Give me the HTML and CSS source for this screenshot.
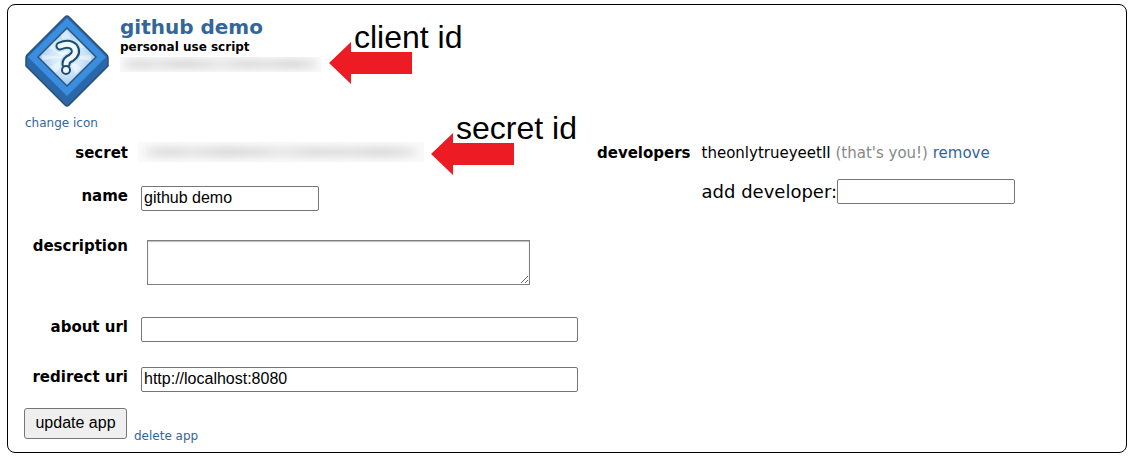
FILE: index.html
```html
<!DOCTYPE html>
<html lang="en">
<head>
<meta charset="utf-8">
<meta name="viewport" content="width=device-width, initial-scale=1">
<title>github demo</title>
<link rel="stylesheet" href="styles.css">
</head>
<body>
<main class="app-card">
  <header class="app-header">
    <svg class="app-icon" viewBox="0 0 84 92" aria-hidden="true">
      <defs>
        <radialGradient id="glow"><stop offset="0" stop-color="#f4faff"/><stop offset="0.5" stop-color="#d3e8fa"/><stop offset="1" stop-color="#a3cbef"/></radialGradient>
      </defs>
      <path d="M40 2Q42 0 44 2L82 40Q83 41 83 43V51L44 90Q42 92 40 90L1 51V43Q1 41 2 40Z" fill="#2b68ab" stroke="#2a4f75" stroke-width="1.5" stroke-linejoin="round"/>
      <path d="M42 3 81 42 42 81 3 42Z" fill="#3b8de0"/>
      <path d="M42 13 71 42 42 71 13 42Z" fill="url(#glow)" stroke="#2b5580" stroke-width="1.5"/>
      <path d="M42 42 36 20 42 15 45 20ZM42 42 53 26 59 32ZM42 42 66 40V46ZM42 42 56 53 51 59ZM42 42 31 58 25 52ZM42 42 17 45V40ZM42 42 24 33 30 26Z" fill="#fff" opacity="0.45"/>
      <g fill="none" stroke-linecap="round" stroke-linejoin="round">
        <path d="M35 31Q44 27 49 32Q53 38 46 43Q41 45 41 49" stroke="#bfe6f2" stroke-width="12"/>
        <path d="M35 31Q44 27 49 32Q53 38 46 43Q41 45 41 49" stroke="#204a70" stroke-width="9"/>
        <path d="M35 31Q44 27 49 32Q53 38 46 43Q41 45 41 49" stroke="#eef8ff" stroke-width="5"/>
      </g>
      <circle cx="41" cy="55" r="4" fill="#eef8ff" stroke="#204a70" stroke-width="2"/>
    </svg>
    <div class="app-summary">
      <h2 class="app-name"><a href="#app">github demo</a></h2>
      <h3 class="app-type">personal use script</h3>
      <div class="redacted redacted-client"></div>
    </div>
  </header>
  <a class="small-link change-icon" href="#icon">change icon</a>

  <form class="app-form">
    <div class="columns">
      <div class="fields">
        <span class="label">secret</span>
        <div class="redacted redacted-secret"></div>
        <label class="label" for="name">name</label>
        <input class="text-box" id="name" type="text" value="github demo">
        <label class="label" for="description">description</label>
        <textarea class="description" id="description"></textarea>
        <label class="label" for="about">about url</label>
        <input class="text-box wide" id="about" type="text">
        <label class="label" for="redirect">redirect uri</label>
        <input class="text-box wide" id="redirect" type="text" value="http://localhost:8080">
      </div>
      <div class="developers">
        <span class="label">developers</span>
        <div class="developer-list">
          <div class="developer">theonlytrueyeetII <span class="muted">(that's you!)</span> <a href="#remove">remove</a></div>
          <div class="add-developer"><label for="developer">add developer:</label><input class="text-box" id="developer" type="text"></div>
        </div>
      </div>
    </div>
    <div class="actions">
      <button class="update" type="button">update app</button>
      <a class="small-link" href="#delete">delete app</a>
    </div>
  </form>

  <div class="note note-client">
    <svg class="arrow" viewBox="0 0 83 42" aria-hidden="true"><path d="M0 21 22 0V10H83V32H22V42Z" fill="#ed1c24"/></svg>
    <span class="note-text">client id</span>
  </div>
  <div class="note note-secret">
    <svg class="arrow" viewBox="0 0 83 42" aria-hidden="true"><path d="M0 21 22 0V10H83V32H22V42Z" fill="#ed1c24"/></svg>
    <span class="note-text">secret id</span>
  </div>
</main>
</body>
</html>
```

FILE: styles.css
```css
* {
  box-sizing: border-box;
}

body {
  margin: 0;
  background: #fff;
  color: #000;
  font-family: Verdana, "DejaVu Sans", sans-serif;
  font-size: 15px;
}

a {
  color: #369;
  text-decoration: none;
}

.app-card {
  position: relative;
  margin: 4px 5px 7px 7px;
  padding: 10px 16px 13px;
  border: 1px solid #000;
  border-radius: 8px;
}

.app-header {
  display: flex;
  gap: 11px;
}

.app-icon {
  width: 84px;
  height: 92px;
  margin-left: 1px;
}

.app-name,
.app-type {
  margin: 0;
}

.app-name {
  font-size: 20px;
  line-height: 24px;
}

.app-type {
  font-size: 12px;
  line-height: 16px;
}

.redacted {
  overflow: hidden;
  background: #fafafa;
}

.redacted::before {
  content: "";
  display: block;
  height: 8px;
  background: linear-gradient(90deg, #e4e4e4, #d4d4d4 8%, #dedede 18%, #d0d0d0 30%, #d8d8d8 42%, #e4e4e4 50%, #d4d4d4 62%, #dadada 75%, #d0d0d0 88%, #e4e4e4);
  filter: blur(4px);
}

.redacted-client {
  width: 201px;
  height: 15px;
  margin-top: 2px;
  padding: 3px 4px;
}

.redacted-secret {
  width: 286px;
  height: 20px;
  margin: -1px 0 -1px -3px;
  padding: 6px 8px;
}

.small-link {
  font-size: 12px;
  line-height: 18px;
}

.change-icon {
  display: block;
  margin: 7px 1px 11px;
}

.columns {
  display: flex;
  gap: 19px;
}

.fields {
  display: grid;
  grid-template-columns: 104px 437px;
  gap: 25px 13px;
  align-items: start;
}

.label {
  padding-top: 2px;
  font-size: 15px;
  font-weight: bold;
  line-height: 16px;
  text-align: right;
}

.text-box {
  width: 178px;
  height: 25px;
  margin: 0;
  padding: 0 2px 1px;
  border: 1px solid #767676;
  border-radius: 2px;
  background: #fff;
  color: #000;
  font-family: Arial, "Liberation Sans", sans-serif;
  font-size: 16px;
}

.wide {
  width: 100%;
}

.description {
  width: 383px;
  height: 45px;
  margin: 4px 6px 7px;
  padding: 2px;
  border: 1px solid #808080;
  box-shadow: inset 0 1px 1px #bbb;
  font-family: Arial, "Liberation Sans", sans-serif;
  font-size: 16px;
}

.developers {
  display: flex;
  gap: 11px;
}

.developer {
  padding-top: 2px;
  line-height: 16px;
}

.muted {
  color: #888;
}

.add-developer {
  display: flex;
  align-items: center;
  margin-top: 18px;
  font-size: 18px;
}

.actions {
  display: flex;
  align-items: flex-end;
  gap: 7px;
  margin-top: 16px;
}

.actions .small-link {
  margin-bottom: -6px;
}

.update {
  min-width: 103px;
  height: 31px;
  padding: 0 9px 2px;
  border: 1px solid #767676;
  border-radius: 3px;
  background: #efefef;
  color: #000;
  font-family: Arial, "Liberation Sans", sans-serif;
  font-size: 16px;
}

.note {
  position: absolute;
  padding: 26px 0 0;
}

.note-client {
  left: 321px;
  top: 11px;
}

.note-secret {
  left: 423px;
  top: 102px;
}

.arrow {
  display: block;
  width: 83px;
  height: 42px;
}

.note-text {
  position: absolute;
  left: 25px;
  top: 3px;
  font-family: Arial, "Liberation Sans", sans-serif;
  font-size: 32px;
  line-height: 36px;
  white-space: nowrap;
}
```
